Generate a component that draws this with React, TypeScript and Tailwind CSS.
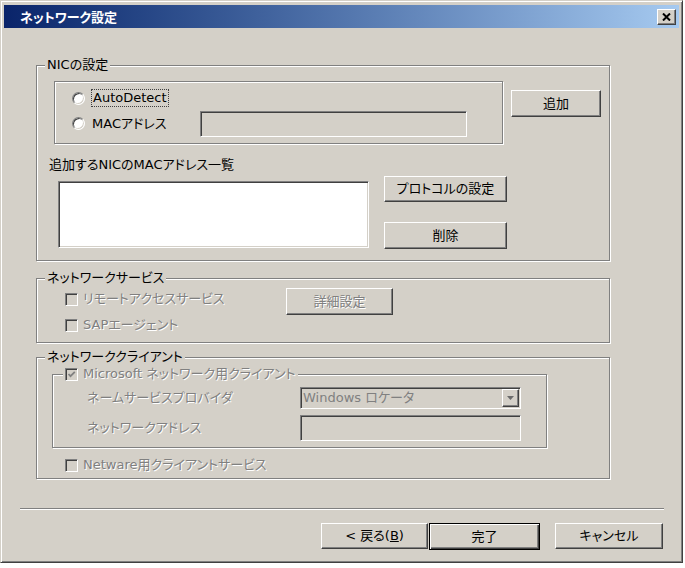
import type { ReactNode } from "react";

const raised =
  "bg-[#d4d0c8] border border-t-white border-l-white border-r-[#404040] border-b-[#404040] shadow-[inset_-1px_-1px_0_#808080]";
const sunken =
  "border border-t-[#808080] border-l-[#808080] border-r-white border-b-white shadow-[inset_1px_1px_0_#404040,inset_-1px_-1px_0_#d4d0c8]";
const etched = "border border-[#808080] shadow-[inset_1px_1px_0_#fff,1px_1px_0_#fff]";
const dis = "text-[#808080] [text-shadow:1px_1px_0_#fff]";

function Btn({
  children,
  className = "",
  disabled,
}: {
  children: ReactNode;
  className?: string;
  disabled?: boolean;
}) {
  return (
    <button
      type="button"
      className={`${raised} flex items-center justify-center leading-[16px] ${
        disabled ? dis : "text-black"
      } ${className}`}
    >
      {children}
    </button>
  );
}

function Radio() {
  return (
    <span className="w-[13px] h-[13px] shrink-0 rounded-full bg-white border border-t-[#808080] border-l-[#808080] border-r-white border-b-white shadow-[inset_1px_1px_0_#404040,inset_-1px_-1px_0_#d4d0c8]" />
  );
}

function Check({ checked }: { checked?: boolean }) {
  return (
    <span
      className={`w-[13px] h-[13px] shrink-0 bg-[#d4d0c8] ${sunken} flex items-center justify-center`}
    >
      {checked && (
        <svg width="9" height="9" viewBox="0 0 9 9">
          <polyline
            points="1.5,4 3.5,6.2 7.8,1.8"
            fill="none"
            stroke="#808080"
            strokeWidth="1.8"
          />
        </svg>
      )}
    </span>
  );
}

function Group({
  title,
  className = "",
  children,
}: {
  title: ReactNode;
  className?: string;
  children: ReactNode;
}) {
  return (
    <fieldset className={`${etched} ${className}`}>
      <legend className="ml-[8px] px-[2px] leading-[16px] bg-[#d4d0c8]">{title}</legend>
      {children}
    </fieldset>
  );
}

export default function App() {
  return (
    <div className="w-[685px] h-[568px] bg-white font-['DejaVu_Sans','Noto_Sans_CJK_JP',sans-serif] text-[13px] text-black [font-feature-settings:'palt']">
      <div className="w-[683px] h-[563px] bg-[#d4d0c8] border border-t-[#d4d0c8] border-l-[#d4d0c8] border-r-[#404040] border-b-[#404040] shadow-[inset_1px_1px_0_#fff,inset_-1px_-1px_0_#808080] px-[3px] pt-[4px] flex flex-col">
        {/* title bar */}
        <div className="h-[23px] flex items-center bg-gradient-to-r from-[#0a246a] to-[#a6caf0] pl-[16px] pr-[3px]">
          <span className="text-white font-bold text-[13px] leading-[16px] font-['Noto_Sans_CJK_JP',sans-serif]">
            ネットワーク設定
          </span>
          <span
            className={`ml-auto w-[19px] h-[16px] ${raised} flex items-center justify-center`}
          >
            <svg width="9" height="8" viewBox="0 0 9 8">
              <path d="M1 0.5 L8 7.5 M8 0.5 L1 7.5" stroke="#000" strokeWidth="2" />
            </svg>
          </span>
        </div>

        {/* NIC settings */}
        <Group title="NICの設定" className="mt-[29px] ml-[32px] w-[574px] h-[204px]">
          <div className="pl-[12px] flex flex-col">
            <div className="flex items-start">
              <div className={`${etched} ml-[5px] mt-[8px] w-[449px] h-[63px] pl-[17px] pt-[3px]`}>
                <div className="h-[26px] flex items-center">
                  <Radio />
                  <span className="ml-[6px] border border-dotted border-[#404040] px-[1px] leading-[16px]">
                    AutoDetect
                  </span>
                </div>
                <div className="h-[25px] flex items-center">
                  <Radio />
                  <span className="ml-[7px] w-[108px] leading-[16px]">MACアドレス</span>
                  <div className={`${sunken} w-[267px] h-[26px] bg-[#d4d0c8]`} />
                </div>
              </div>
              <Btn className="ml-[8px] mt-[17px] w-[90px] h-[27px]">追加</Btn>
            </div>
            <div className="mt-[13px] leading-[16px]">追加するNICのMACアドレス一覧</div>
            <div className="mt-[3px] flex items-start">
              <div className={`${sunken} ml-[9px] mt-[5px] w-[311px] h-[67px] bg-white`} />
              <div className="ml-[15px] flex flex-col">
                <Btn className="w-[123px] h-[26px]">プロトコルの設定</Btn>
                <Btn className="mt-[20px] w-[123px] h-[27px]">削除</Btn>
              </div>
            </div>
          </div>
        </Group>

        {/* network services */}
        <Group title="ネットワークサービス" className="mt-[9px] ml-[32px] w-[574px] h-[73px]">
          <div className="pl-[28px] flex items-start">
            <div className="w-[221px] flex flex-col">
              <div className="h-[26px] flex items-center">
                <Check />
                <span className={`ml-[5px] leading-[16px] ${dis}`}>リモートアクセスサービス</span>
              </div>
              <div className="h-[26px] flex items-center">
                <Check />
                <span className={`ml-[5px] leading-[16px] ${dis}`}>SAPエージェント</span>
              </div>
            </div>
            <Btn disabled className="mt-[2px] w-[107px] h-[27px]">
              詳細設定
            </Btn>
          </div>
        </Group>

        {/* network clients */}
        <Group title="ネットワーククライアント" className="mt-[6px] ml-[32px] w-[574px] h-[130px]">
          <fieldset className={`${etched} mt-[1px] ml-[15px] w-[495px] h-[82px]`}>
            <legend className="ml-[10px] px-[2px] bg-[#d4d0c8]">
              <span className="flex items-center h-[16px]">
                <Check checked />
                <span className={`ml-[5px] leading-[16px] ${dis}`}>
                  Microsoft ネットワーク用クライアント
                </span>
              </span>
            </legend>
            <div className="pl-[34px] flex flex-col">
              <div className="mt-[5px] flex items-center">
                <span className={`w-[213px] leading-[16px] ${dis}`}>ネームサービスプロバイダ</span>
                <div className={`${sunken} w-[221px] h-[22px] bg-[#d4d0c8] flex items-center pl-[2px] pr-[1px]`}>
                  <span className="text-[#808080] leading-[16px]">Windows ロケータ</span>
                  <span className={`ml-auto w-[17px] h-[18px] ${raised} flex items-center justify-center`}>
                    <svg width="7" height="4" viewBox="0 0 7 4">
                      <path d="M0 0 H7 L3.5 4 Z" fill="#6b6b6b" />
                    </svg>
                  </span>
                </div>
              </div>
              <div className="mt-[6px] flex items-center">
                <span className={`w-[213px] leading-[16px] ${dis}`}>ネットワークアドレス</span>
                <div className={`${sunken} w-[221px] h-[26px] bg-[#d4d0c8]`} />
              </div>
            </div>
          </fieldset>
          <div className="mt-[5px] pl-[28px] h-[24px] flex items-center">
            <Check />
            <span className={`ml-[5px] leading-[16px] ${dis}`}>Netware用クライアントサービス</span>
          </div>
        </Group>

        {/* separator */}
        <div className="mt-[29px] ml-[16px] w-[644px] h-[2px] border-t border-t-[#808080] border-b border-b-white" />

        {/* footer buttons */}
        <div className="mt-[13px] flex items-start">
          <Btn className="ml-[317px] w-[107px] h-[26px]">
            &lt; 戻る(<span className="underline">B</span>)
          </Btn>
          <button
            type="button"
            className="ml-[1px] w-[111px] h-[27px] bg-[#d4d0c8] border border-black shadow-[inset_1px_1px_0_#fff,inset_-1px_-1px_0_#404040,inset_-2px_-2px_0_#808080] flex items-center justify-center leading-[16px]"
          >
            完了
          </button>
          <Btn className="ml-[15px] w-[108px] h-[26px]">キャンセル</Btn>
        </div>
      </div>
    </div>
  );
}
